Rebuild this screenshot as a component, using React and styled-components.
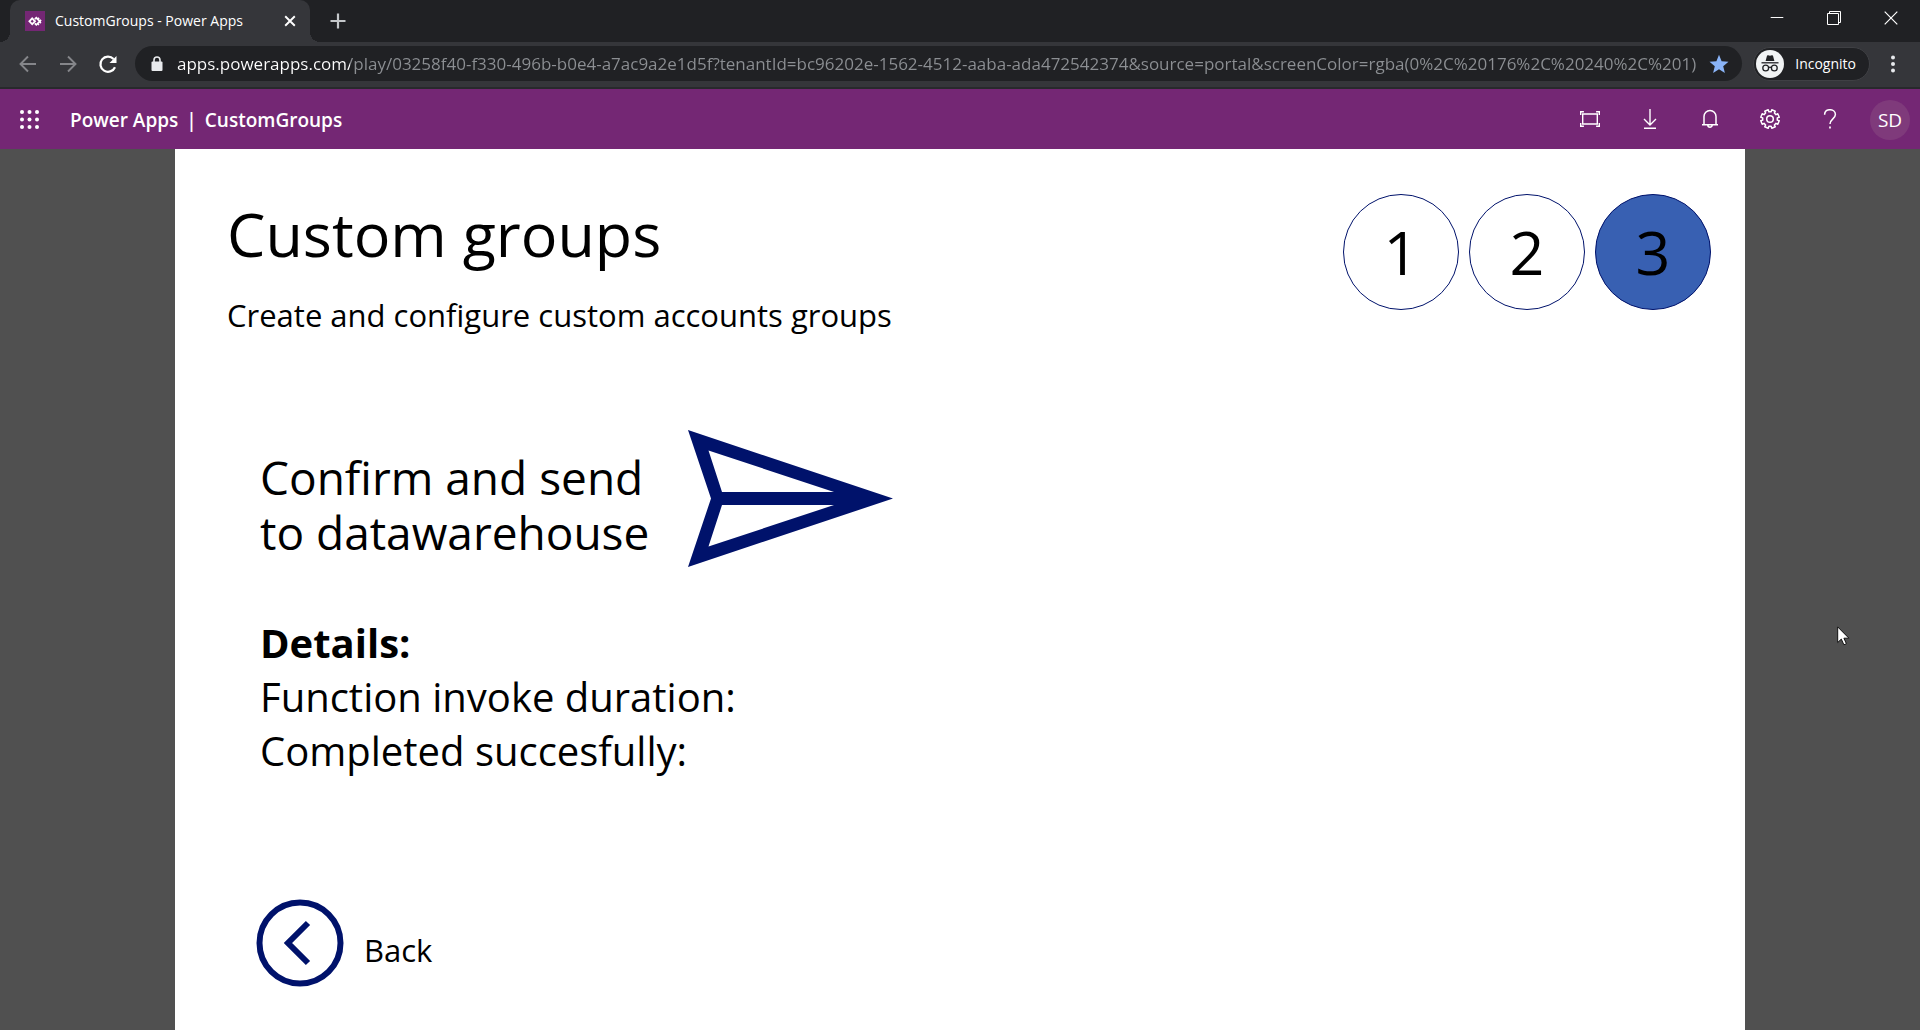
import React from "react";
import styled, { createGlobalStyle } from "styled-components";

const GlobalStyle = createGlobalStyle`
  *, *::before, *::after { box-sizing: border-box; }
  html, body, #root { height: 100%; }
  body {
    margin: 0;
    background: #505050;
    font-family: "Open Sans", "Noto Sans", sans-serif;
    color: #000;
  }
  button { border: 0; padding: 0; background: none; color: inherit; font: inherit; cursor: pointer; }
  svg { display: block; flex: none; }
`;

const Window = styled.div`
  min-height: 100%;
  display: flex;
  flex-direction: column;
`;

/* Browser chrome */
const TabStrip = styled.div`
  display: flex;
  height: 42px;
  padding: 0 1px 0 10px;
  background: #202124;
  color: #fff;
`;

const Tab = styled.div`
  position: relative;
  display: flex;
  align-items: center;
  width: 300px;
  padding: 0 12px 0 15px;
  border-radius: 10px 10px 0 0;
  background: #35363a;
  font-size: 14px;
  line-height: 20px;

  &::before, &::after {
    content: "";
    position: absolute;
    bottom: 0;
    width: 10px;
    height: 10px;
  }
  &::before { left: -10px; background: radial-gradient(circle at 0 0, transparent 10px, #35363a 10px); }
  &::after { right: -10px; background: radial-gradient(circle at 100% 0, transparent 10px, #35363a 10px); }
`;

const TabTitle = styled.span`
  flex: 1;
  margin-left: 10px;
  white-space: nowrap;
`;

const IconButton = styled.button`
  display: flex;
  align-items: center;
  justify-content: center;
  width: ${(p) => p.$w}px;
  height: ${(p) => p.$h}px;
  color: ${(p) => p.$color || "#fff"};
`;

const NewTab = styled.div`
  display: flex;
  align-items: center;
  flex: 1;
  padding-left: 12px;
`;

const WindowControls = styled.div`
  display: flex;
  align-items: center;
  padding-bottom: 6px;
`;

const Toolbar = styled.div`
  display: flex;
  align-items: center;
  height: 47px;
  padding: 0 4px 2px 8px;
  border-bottom: 2px solid #28292c;
  background: #35363a;
  color: #fff;
`;

const AddressBar = styled.label`
  display: flex;
  align-items: center;
  flex: 1;
  height: 35px;
  margin: 0 11px 0 7px;
  padding: 0 14px 0 16px;
  border-radius: 18px;
  background: #202124;
`;

const Address = styled.input`
  flex: 1;
  min-width: 0;
  height: 28px;
  margin-left: 14px;
  padding: 0;
  border: 0;
  outline: 0;
  background: linear-gradient(to right, #fff ${(p) => p.$host}px, #8c8f93 ${(p) => p.$host}px);
  background-clip: text;
  color: transparent;
  font-family: inherit;
  font-size: 17px;
`;

const Profile = styled.button`
  && {
    display: flex;
    align-items: center;
    gap: 11px;
    height: 34px;
    padding: 0 13px 0 2px;
    border: 1px solid #3f4044;
    border-radius: 17px;
    background: #202124;
    font-size: 14px;
  }
`;

/* Power Apps header */
const AppHeader = styled.header`
  display: flex;
  align-items: center;
  height: 60px;
  padding: 0 10px 0 5px;
  background: #742774;
  color: #fff;
`;

const Brand = styled.div`
  display: flex;
  flex: 1;
  gap: 8px;
  margin-left: 16px;
  padding-top: 2px;
  font-size: 19px;
  line-height: 24px;
  font-weight: 600;
`;

const HeaderActions = styled.nav`
  display: flex;
  align-items: center;
`;

const Avatar = styled.button`
  && {
    width: 40px;
    height: 40px;
    margin: 2px 0 0 10px;
    border-radius: 50%;
    background: #7f3a7b;
    font-size: 19px;
  }
`;

/* App canvas */
const Stage = styled.main`
  position: relative;
  flex: 1;
  display: flex;
  padding: 0 175px;
  background: #505050;
`;

const Canvas = styled.div`
  flex: 1;
  display: flex;
  flex-direction: column;
  padding: 45px 34px 43px 52px;
  background: #fff;
`;

const Top = styled.div`
  display: flex;
  justify-content: space-between;
`;

const Title = styled.h1`
  margin: 4px 0 0;
  font-size: 61px;
  line-height: 72px;
  font-weight: 400;
`;

const Subtitle = styled.p`
  margin: 26px 0 0;
  font-size: 31px;
  line-height: 38px;
`;

const Steps = styled.ol`
  display: flex;
  gap: 10px;
  margin: 0;
  padding: 0;
  list-style: none;
`;

const Step = styled.li`
  display: flex;
  align-items: center;
  justify-content: center;
  width: 116px;
  height: 116px;
  border: 1px solid #00126b;
  border-radius: 50%;
  background: ${(p) => (p.$active ? "#3860b2" : "#fff")};
  font-size: 61px;
  line-height: 72px;
`;

const Body = styled.section`
  margin-top: 96px;
  padding-left: 33px;
`;

const SendRow = styled.div`
  display: flex;
  align-items: center;
`;

const SendLabel = styled.p`
  width: 428px;
  margin: 0;
  padding-top: 12px;
  font-size: 46px;
  line-height: 55px;
`;

const Details = styled.div`
  margin-top: 49px;
  font-size: 40px;
  line-height: 54px;
`;

const DetailsTitle = styled.h2`
  margin: 0;
  font-size: inherit;
  font-weight: 700;
`;

const DetailLine = styled.p`
  margin: 0;
`;

const BackButton = styled.button`
  && {
    display: flex;
    align-items: center;
    align-self: flex-start;
    gap: 20px;
    margin: auto 0 0 29px;
    font-size: 31px;
    line-height: 36px;
  }
`;

const BackLabel = styled.span`
  padding-top: 14px;
`;

const Pointer = styled.svg`
  position: absolute;
  top: 477px;
  right: 70px;
`;

const Line = ({ size = 20, w = 1.5, children, ...rest }) => (
  <svg width={size} height={size} viewBox="0 0 20 20" fill="none" stroke="currentColor" strokeWidth={w} {...rest}>
    {children}
  </svg>
);

const Favicon = () => (
  <svg width="20" height="20" viewBox="0 0 20 20">
    <rect width="20" height="20" fill="#742774" />
    <g fill="none" stroke="#fff" strokeWidth="1.8">
      <path d="M7.200 7.400 10 10.300 7.200 13.200 4.400 10.300z" />
      <path d="M9.800 8.200 11.300 6.800 14.800 10.300 11.300 13.800 9.800 12.400" />
      <path d="M12.800 6.800 16.300 10.300 12.800 13.800" strokeDasharray="1.800 1" />
    </g>
  </svg>
);

const Incognito = () => (
  <svg width="28" height="28" viewBox="0 0 28 28">
    <circle cx="14" cy="14" r="14" fill="#f1f3f4" />
    <path d="M9.600 11 11 5.800q.3-.8 1.100-.5l1.900.5 1.900-.5q.8-.3 1.100.5L18.400 11z" fill="#202124" />
    <path d="M5.500 12.800h17" stroke="#202124" strokeWidth="1.300" />
    <g fill="none" stroke="#202124" strokeWidth="1.300">
      <circle cx="9.700" cy="18" r="2.900" />
      <circle cx="18.300" cy="18" r="2.900" />
      <path d="M12.600 17.600q1.400-.8 2.800 0" />
    </g>
  </svg>
);

/* Gear outline: eight rounded teeth around the hub */
const gearPath = (() => {
  const pts = [];
  const teeth = 8;
  for (let i = 0; i < teeth; i += 1) {
    const mid = ((i + 0.5) * 2 * Math.PI) / teeth;
    [[-0.24, 7.4], [-0.2, 9.4], [0.2, 9.4], [0.24, 7.4]].forEach(([a, r]) => {
      pts.push(`${(10 + r * Math.sin(mid + a)).toFixed(2)} ${(10 - r * Math.cos(mid + a)).toFixed(2)}`);
    });
  }
  return `M${pts.join("L")}Z`;
})();

const dots = [2, 9.5, 17];
const host = "apps.powerapps.com";
const path =
  "/play/03258f40-f330-496b-b0e4-a7ac9a2e1d5f?tenantId=bc96202e-1562-4512-aaba-ada472542374&source=portal&screenColor=rgba(0%2C%20176%2C%20240%2C%201)";

export default function App() {
  return (
    <Window>
      <GlobalStyle />
      <TabStrip>
        <Tab>
          <Favicon />
          <TabTitle>CustomGroups - Power Apps</TabTitle>
          <IconButton $w={16} $h={24} aria-label="Close tab">
            <Line size={16} w={2.4}><path d="M4 4l12 12M16 4 4 16" /></Line>
          </IconButton>
        </Tab>
        <NewTab>
          <IconButton $w={32} $h={32} $color="#c4c7ca" aria-label="New tab">
            <Line w={2.2}><path d="M10 2.500v15M2.500 10h15" /></Line>
          </IconButton>
        </NewTab>
        <WindowControls>
          <IconButton $w={57} $h={36} aria-label="Minimize">
            <Line size={14} w={1.4}><path d="M1 9.300h18" /></Line>
          </IconButton>
          <IconButton $w={57} $h={36} aria-label="Restore">
            <svg width="14" height="14" viewBox="0 0 14 14" fill="none" stroke="currentColor">
              <path d="M.5 2.500h11v11H.5zM2.500 2.500v-2h11v11h-2" />
            </svg>
          </IconButton>
          <IconButton $w={57} $h={36} aria-label="Close">
            <Line size={14} w={1.7}><path d="M1 1l18 18M19 1 1 19" /></Line>
          </IconButton>
        </WindowControls>
      </TabStrip>

      <Toolbar>
        <IconButton $w={40} $h={32} $color="#85868a" aria-label="Back">
          <Line w={1.9}><path d="M18 10H3M10 2.500 2.500 10l7.500 7.500" /></Line>
        </IconButton>
        <IconButton $w={40} $h={32} $color="#85868a" aria-label="Forward">
          <Line w={1.9}><path d="M2 10h15M10 2.500l7.500 7.500-7.500 7.500" /></Line>
        </IconButton>
        <IconButton $w={40} $h={32} aria-label="Reload">
          <Line w={2.2}>
            <path d="M17 13.200A7.600 7.600 0 1 1 15.600 5" />
            <path d="M18.500 2v7h-7z" fill="currentColor" stroke="none" />
          </Line>
        </IconButton>
        <AddressBar>
          <svg width="12" height="16" viewBox="0 0 12 16">
            <rect x="0.500" y="5.500" width="11" height="9.500" rx="1" fill="#e8eaed" />
            <path d="M3 6V4a3 3 0 0 1 6 0v2" fill="none" stroke="#e8eaed" strokeWidth="1.600" />
          </svg>
          <Address aria-label="Address" defaultValue={host + path} $host={173} />
          <IconButton $w={18} $h={24} $color="#8ab4f8" aria-label="Bookmark">
            <svg width="20" height="20" viewBox="0 0 20 20">
              <path d="M10 .8l2.600 6.400 6.900.5-5.300 4.500 1.700 6.700L10 15.200l-5.900 3.700 1.700-6.700L.5 7.700l6.900-.5z" fill="currentColor" />
            </svg>
          </IconButton>
        </AddressBar>
        <Profile>
          <Incognito />
          Incognito
        </Profile>
        <IconButton $w={46} $h={32} aria-label="Menu">
          <svg width="4" height="18" viewBox="0 0 4 18" fill="#e8eaed">
            <circle cx="2" cy="2.500" r="2" /><circle cx="2" cy="9" r="2" /><circle cx="2" cy="15.500" r="2" />
          </svg>
        </IconButton>
      </Toolbar>

      <AppHeader>
        <IconButton $w={49} $h={49} aria-label="App launcher">
          <svg width="19" height="19" viewBox="0 0 19 19" fill="currentColor">
            {dots.map((y) => dots.map((x) => <circle key={`${x}-${y}`} cx={x} cy={y} r="2" />))}
          </svg>
        </IconButton>
        <Brand>
          <span>Power Apps</span>
          <span>|</span>
          <span>CustomGroups</span>
        </Brand>
        <HeaderActions>
          <IconButton $w={60} $h={60} aria-label="Fit to screen">
            <svg width="20" height="16" viewBox="0 0 20 16" fill="none" stroke="currentColor" strokeWidth="1.400">
              <path d="M2.700 3h14.600v10H2.700zM.7 4V.7h3.200M16.100.7h3.200V4M19.300 12v3.300h-3.200M3.900 15.300H.7V12" />
            </svg>
          </IconButton>
          <IconButton $w={60} $h={60} aria-label="Download">
            <Line w={1.4}><path d="M10 0v15.500M4 10l6 6 6-6M4 19.300h12" /></Line>
          </IconButton>
          <IconButton $w={60} $h={60} aria-label="Notifications">
            <Line w={1.5}><path d="M2 15.800h16M4 15.800V7.500a6 6 0 0 1 12 0v8.300M7.800 16a2.200 2.200 0 0 0 4.400 0" /></Line>
          </IconButton>
          <IconButton $w={60} $h={60} aria-label="Settings">
            <Line w={1.5} strokeLinejoin="round"><path d={gearPath} /><circle cx="10" cy="10" r="3.300" /></Line>
          </IconButton>
          <IconButton $w={60} $h={60} aria-label="Help">
            <Line w={1.5}>
              <path d="M4.600 5.800C4.600 2.400 7 .7 10 .7s5.400 1.900 5.400 4.800c0 4.200-5.400 4.700-5.400 9.500" />
              <path d="M10 17.500v2" strokeWidth="1.700" />
            </Line>
          </IconButton>
          <Avatar>SD</Avatar>
        </HeaderActions>
      </AppHeader>

      <Stage>
        <Canvas>
          <Top>
            <div>
              <Title>Custom groups</Title>
              <Subtitle>Create and configure custom accounts groups</Subtitle>
            </div>
            <Steps>
              <Step>1</Step>
              <Step>2</Step>
              <Step $active>3</Step>
            </Steps>
          </Top>
          <Body>
            <SendRow>
              <SendLabel>Confirm and send to datawarehouse</SendLabel>
              <IconButton $w={205} $h={137} $color="#00126b" aria-label="Send">
                <svg width="205" height="137" viewBox="0 0 205 137">
                  <path
                    fill="currentColor"
                    fillRule="evenodd"
                    d="M0 0 205 68.500 0 137 23 68.500zM20.500 20.500 34 62H146zM20.500 116.500 34 75H146z"
                  />
                </svg>
              </IconButton>
            </SendRow>
            <Details>
              <DetailsTitle>Details:</DetailsTitle>
              <DetailLine>Function invoke duration:</DetailLine>
              <DetailLine>Completed succesfully:</DetailLine>
            </Details>
          </Body>
          <BackButton>
            <svg width="88" height="88" viewBox="0 0 88 88" fill="none" stroke="#00126b" strokeWidth="6">
              <circle cx="44" cy="44" r="40.500" />
              <path d="M52 24 32 44l20 20" />
            </svg>
            <BackLabel>Back</BackLabel>
          </BackButton>
        </Canvas>
        <Pointer width="13" height="20" viewBox="0 0 13 20" aria-hidden="true">
          <path d="M.7.900v15.600l3.600-3.400 2.600 5.700 2.500-1.100-2.500-5.500h5z" fill="#fff" stroke="#111" strokeWidth="1" />
        </Pointer>
      </Stage>
    </Window>
  );
}
